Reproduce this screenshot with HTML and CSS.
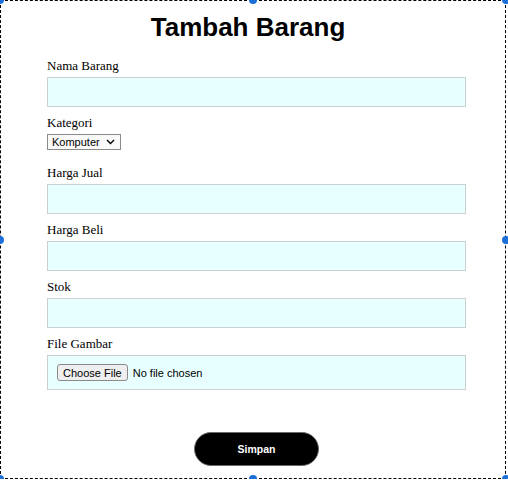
FILE: index.html
```html
<!DOCTYPE html>
<html lang="id">
<head>
<meta charset="utf-8">
<title>Tambah Barang</title>
<link rel="stylesheet" href="styles.css">
</head>
<body>
<div class="frame">
  <span class="handle h-tl"></span>
  <span class="handle h-tm"></span>
  <span class="handle h-tr"></span>
  <span class="handle h-ml"></span>
  <span class="handle h-mr"></span>
  <span class="handle h-bl"></span>
  <span class="handle h-bm"></span>
  <span class="handle h-br"></span>

  <h1 class="title">Tambah Barang</h1>
  <form class="form">
    <div class="field">
      <label class="label">Nama Barang</label>
      <input class="text" type="text">
    </div>
    <div class="field field-select">
      <label class="label">Kategori</label>
      <select class="select">
        <option>Komputer</option>
      </select>
    </div>
    <div class="field">
      <label class="label">Harga Jual</label>
      <input class="text" type="text">
    </div>
    <div class="field">
      <label class="label">Harga Beli</label>
      <input class="text" type="text">
    </div>
    <div class="field">
      <label class="label">Stok</label>
      <input class="text" type="text">
    </div>
    <div class="field">
      <label class="label">File Gambar</label>
      <input class="file" type="file">
    </div>
    <div class="actions">
      <button class="btn" type="button">Simpan</button>
    </div>
  </form>
</div>
</body>
</html>
```
FILE: styles.css
```css
html, body {
  margin: 0;
  padding: 0;
  background: #fff;
}
body {
  font-family: "Liberation Serif", "Times New Roman", serif;
  font-size: 13px;
  color: #000;
}
.frame {
  position: relative;
  box-sizing: border-box;
  width: 506px;
  height: 479px;
  border: 1px dashed #000;
  padding: 12px 0 0 46px;
}
.handle {
  position: absolute;
  width: 8px;
  height: 8px;
  border-radius: 50%;
  background: #1b6fd8;
}
.h-tl { left: -5px; top: -5px; }
.h-tm { left: calc(50% - 4px); top: -5px; }
.h-tr { right: -5px; top: -5px; }
.h-ml { left: -5px; top: calc(50% - 4px); }
.h-mr { right: -5px; top: calc(50% - 4px); }
.h-bl { left: -5px; bottom: -5px; }
.h-bm { left: calc(50% - 4px); bottom: -5px; }
.h-br { right: -5px; bottom: -5px; }

.title {
  width: 419px;
  box-sizing: border-box;
  padding-right: 17px;
  margin: 0 0 16px 0;
  text-align: center;
  font-family: "Liberation Sans", Arial, sans-serif;
  font-weight: bold;
  font-size: 26px;
  line-height: 29px;
}
.form {
  width: 419px;
  display: flex;
  flex-direction: column;
  gap: 8px;
}
.field {
  display: flex;
  flex-direction: column;
  align-items: flex-start;
}
.field-select {
  margin-bottom: 7px;
}
.label {
  display: block;
  font-size: 13px;
  line-height: 15px;
  margin-bottom: 4px;
}
.text {
  box-sizing: border-box;
  width: 100%;
  height: 30px;
  margin: 0;
  border: 1px solid #c9d0d0;
  background: #e8ffff;
  outline: none;
}
.select {
  -webkit-appearance: none;
  appearance: none;
  box-sizing: border-box;
  width: 74px;
  height: 16px;
  margin: 0;
  padding: 0 0 0 4px;
  border: 1px solid #8a8a8a;
  border-radius: 0;
  font-family: "Liberation Sans", Arial, sans-serif;
  font-size: 11px;
  line-height: 14px;
  color: #000;
  background-color: #fafafa;
  background-image: url("data:image/svg+xml,%3Csvg xmlns='http://www.w3.org/2000/svg' width='9' height='6' viewBox='0 0 9 6'%3E%3Cpath d='M1 1l3.5 3.5L8 1' fill='none' stroke='%23000' stroke-width='1.4'/%3E%3C/svg%3E");
  background-repeat: no-repeat;
  background-position: right 5px center;
}
.file {
  box-sizing: border-box;
  width: 100%;
  height: 35px;
  margin: 0;
  padding: 8px 9px;
  border: 1px solid #c9d0d0;
  background: #e8ffff;
  font-family: "Liberation Sans", Arial, sans-serif;
  font-size: 11px;
  color: #000;
}
.file::file-selector-button {
  box-sizing: border-box;
  height: 17px;
  margin: 0 5px 0 0;
  padding: 0 5px;
  border: 1px solid #8a8a8a;
  border-radius: 3px;
  background: #efefef;
  font-family: "Liberation Sans", Arial, sans-serif;
  font-size: 11px;
  color: #000;
}
.actions {
  display: flex;
  justify-content: center;
  margin-top: 34px;
}
.btn {
  box-sizing: border-box;
  width: 125px;
  height: 34px;
  border: 1px solid #6a6a6a;
  border-radius: 17px;
  background: #000;
  color: #fff;
  font-family: "Liberation Sans", Arial, sans-serif;
  font-weight: bold;
  font-size: 10.5px;
  padding: 0;
}
```
